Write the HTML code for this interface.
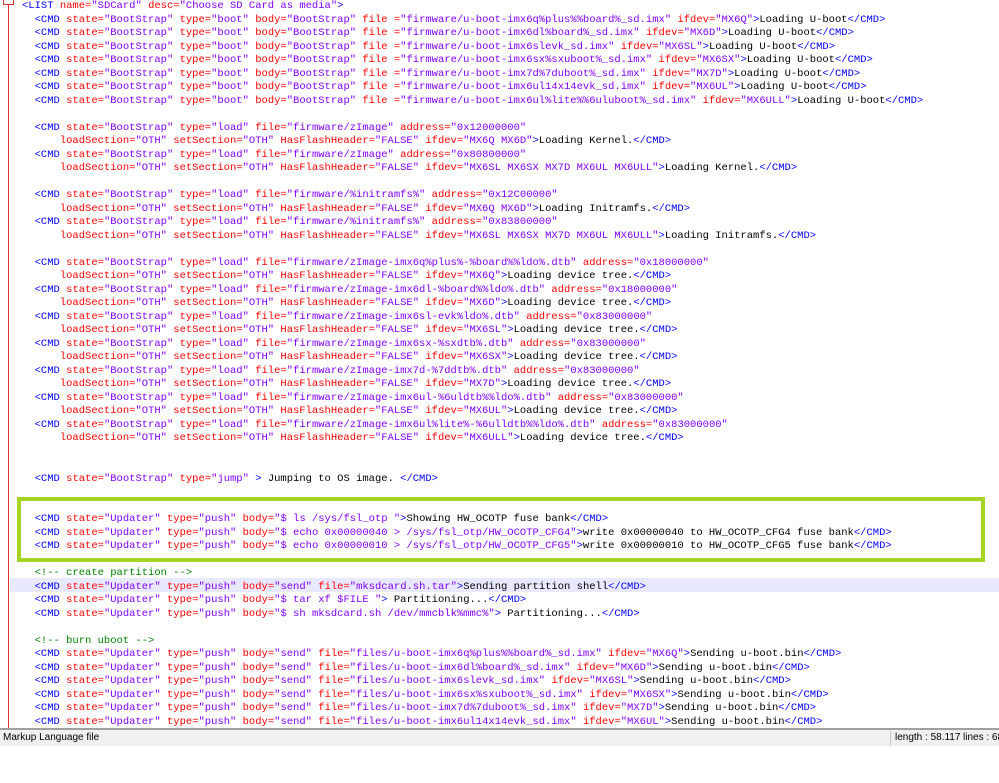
<!DOCTYPE html>
<html><head><meta charset="utf-8"><style>
html,body{margin:0;padding:0;background:#fff;width:999px;height:783px;overflow:hidden;position:relative}
#ed{position:absolute;left:0;top:0;width:999px;height:728px;overflow:hidden;background:#fff}
pre{position:absolute;left:22px;top:0px;margin:0;font-family:"Liberation Mono",monospace;font-size:10.5px;line-height:13.5px;color:#000;white-space:pre}
pre i,pre b,pre u,pre s{font-style:normal;font-weight:normal;text-decoration:none}
pre i{color:#0000ff}pre b{color:#ff0000}pre u{color:#8000ff}pre s{color:#008000}
.hl{position:absolute;left:10px;top:578px;width:989px;height:13.5px;background:#e8e8ff}
.red{position:absolute;left:8px;top:0;width:1px;height:728px;background:#e03030}
.fold{position:absolute;left:3px;top:0;width:9px;height:4px;border:1px solid #e03030;border-top:none;background:#fff}
.box{position:absolute;left:17px;top:497px;width:960px;height:57px;border:4px solid #a6d422}
#sb{position:absolute;left:0;top:728px;width:999px;height:18px;background:#f0f0f0;border-top:2px solid #a0a0a0;box-sizing:border-box;font-family:"Liberation Sans",sans-serif;font-size:10px;color:#000;white-space:nowrap}
#sb span{position:absolute;top:2px;white-space:nowrap}
.sep{position:absolute;left:890px;top:1px;width:1px;height:15px;background:#c8c8c8}
</style></head><body>
<div id="ed">
<div class="hl"></div>
<div class="red"></div><div class="fold"></div>
<pre><i>&lt;LIST</i> <b>name=</b><u>"SDCard"</u> <b>desc=</b><u>"Choose SD Card as media"</u><i>&gt;</i>
  <i>&lt;CMD</i> <b>state=</b><u>"BootStrap"</u> <b>type=</b><u>"boot"</u> <b>body=</b><u>"BootStrap"</u> <b>file =</b><u>"firmware/u-boot-imx6q%plus%%board%_sd.imx"</u> <b>ifdev=</b><u>"MX6Q"</u><i>&gt;</i>Loading U-boot<i>&lt;/CMD&gt;</i>
  <i>&lt;CMD</i> <b>state=</b><u>"BootStrap"</u> <b>type=</b><u>"boot"</u> <b>body=</b><u>"BootStrap"</u> <b>file =</b><u>"firmware/u-boot-imx6dl%board%_sd.imx"</u> <b>ifdev=</b><u>"MX6D"</u><i>&gt;</i>Loading U-boot<i>&lt;/CMD&gt;</i>
  <i>&lt;CMD</i> <b>state=</b><u>"BootStrap"</u> <b>type=</b><u>"boot"</u> <b>body=</b><u>"BootStrap"</u> <b>file =</b><u>"firmware/u-boot-imx6slevk_sd.imx"</u> <b>ifdev=</b><u>"MX6SL"</u><i>&gt;</i>Loading U-boot<i>&lt;/CMD&gt;</i>
  <i>&lt;CMD</i> <b>state=</b><u>"BootStrap"</u> <b>type=</b><u>"boot"</u> <b>body=</b><u>"BootStrap"</u> <b>file =</b><u>"firmware/u-boot-imx6sx%sxuboot%_sd.imx"</u> <b>ifdev=</b><u>"MX6SX"</u><i>&gt;</i>Loading U-boot<i>&lt;/CMD&gt;</i>
  <i>&lt;CMD</i> <b>state=</b><u>"BootStrap"</u> <b>type=</b><u>"boot"</u> <b>body=</b><u>"BootStrap"</u> <b>file =</b><u>"firmware/u-boot-imx7d%7duboot%_sd.imx"</u> <b>ifdev=</b><u>"MX7D"</u><i>&gt;</i>Loading U-boot<i>&lt;/CMD&gt;</i>
  <i>&lt;CMD</i> <b>state=</b><u>"BootStrap"</u> <b>type=</b><u>"boot"</u> <b>body=</b><u>"BootStrap"</u> <b>file =</b><u>"firmware/u-boot-imx6ul14x14evk_sd.imx"</u> <b>ifdev=</b><u>"MX6UL"</u><i>&gt;</i>Loading U-boot<i>&lt;/CMD&gt;</i>
  <i>&lt;CMD</i> <b>state=</b><u>"BootStrap"</u> <b>type=</b><u>"boot"</u> <b>body=</b><u>"BootStrap"</u> <b>file =</b><u>"firmware/u-boot-imx6ul%lite%%6uluboot%_sd.imx"</u> <b>ifdev=</b><u>"MX6ULL"</u><i>&gt;</i>Loading U-boot<i>&lt;/CMD&gt;</i>

  <i>&lt;CMD</i> <b>state=</b><u>"BootStrap"</u> <b>type=</b><u>"load"</u> <b>file=</b><u>"firmware/zImage"</u> <b>address=</b><u>"0x12000000"</u>
      <b>loadSection=</b><u>"OTH"</u> <b>setSection=</b><u>"OTH"</u> <b>HasFlashHeader=</b><u>"FALSE"</u> <b>ifdev=</b><u>"MX6Q MX6D"</u><i>&gt;</i>Loading Kernel.<i>&lt;/CMD&gt;</i>
  <i>&lt;CMD</i> <b>state=</b><u>"BootStrap"</u> <b>type=</b><u>"load"</u> <b>file=</b><u>"firmware/zImage"</u> <b>address=</b><u>"0x80800000"</u>
      <b>loadSection=</b><u>"OTH"</u> <b>setSection=</b><u>"OTH"</u> <b>HasFlashHeader=</b><u>"FALSE"</u> <b>ifdev=</b><u>"MX6SL MX6SX MX7D MX6UL MX6ULL"</u><i>&gt;</i>Loading Kernel.<i>&lt;/CMD&gt;</i>

  <i>&lt;CMD</i> <b>state=</b><u>"BootStrap"</u> <b>type=</b><u>"load"</u> <b>file=</b><u>"firmware/%initramfs%"</u> <b>address=</b><u>"0x12C00000"</u>
      <b>loadSection=</b><u>"OTH"</u> <b>setSection=</b><u>"OTH"</u> <b>HasFlashHeader=</b><u>"FALSE"</u> <b>ifdev=</b><u>"MX6Q MX6D"</u><i>&gt;</i>Loading Initramfs.<i>&lt;/CMD&gt;</i>
  <i>&lt;CMD</i> <b>state=</b><u>"BootStrap"</u> <b>type=</b><u>"load"</u> <b>file=</b><u>"firmware/%initramfs%"</u> <b>address=</b><u>"0x83800000"</u>
      <b>loadSection=</b><u>"OTH"</u> <b>setSection=</b><u>"OTH"</u> <b>HasFlashHeader=</b><u>"FALSE"</u> <b>ifdev=</b><u>"MX6SL MX6SX MX7D MX6UL MX6ULL"</u><i>&gt;</i>Loading Initramfs.<i>&lt;/CMD&gt;</i>

  <i>&lt;CMD</i> <b>state=</b><u>"BootStrap"</u> <b>type=</b><u>"load"</u> <b>file=</b><u>"firmware/zImage-imx6q%plus%-%board%%ldo%.dtb"</u> <b>address=</b><u>"0x18000000"</u>
      <b>loadSection=</b><u>"OTH"</u> <b>setSection=</b><u>"OTH"</u> <b>HasFlashHeader=</b><u>"FALSE"</u> <b>ifdev=</b><u>"MX6Q"</u><i>&gt;</i>Loading device tree.<i>&lt;/CMD&gt;</i>
  <i>&lt;CMD</i> <b>state=</b><u>"BootStrap"</u> <b>type=</b><u>"load"</u> <b>file=</b><u>"firmware/zImage-imx6dl-%board%%ldo%.dtb"</u> <b>address=</b><u>"0x18000000"</u>
      <b>loadSection=</b><u>"OTH"</u> <b>setSection=</b><u>"OTH"</u> <b>HasFlashHeader=</b><u>"FALSE"</u> <b>ifdev=</b><u>"MX6D"</u><i>&gt;</i>Loading device tree.<i>&lt;/CMD&gt;</i>
  <i>&lt;CMD</i> <b>state=</b><u>"BootStrap"</u> <b>type=</b><u>"load"</u> <b>file=</b><u>"firmware/zImage-imx6sl-evk%ldo%.dtb"</u> <b>address=</b><u>"0x83000000"</u>
      <b>loadSection=</b><u>"OTH"</u> <b>setSection=</b><u>"OTH"</u> <b>HasFlashHeader=</b><u>"FALSE"</u> <b>ifdev=</b><u>"MX6SL"</u><i>&gt;</i>Loading device tree.<i>&lt;/CMD&gt;</i>
  <i>&lt;CMD</i> <b>state=</b><u>"BootStrap"</u> <b>type=</b><u>"load"</u> <b>file=</b><u>"firmware/zImage-imx6sx-%sxdtb%.dtb"</u> <b>address=</b><u>"0x83000000"</u>
      <b>loadSection=</b><u>"OTH"</u> <b>setSection=</b><u>"OTH"</u> <b>HasFlashHeader=</b><u>"FALSE"</u> <b>ifdev=</b><u>"MX6SX"</u><i>&gt;</i>Loading device tree.<i>&lt;/CMD&gt;</i>
  <i>&lt;CMD</i> <b>state=</b><u>"BootStrap"</u> <b>type=</b><u>"load"</u> <b>file=</b><u>"firmware/zImage-imx7d-%7ddtb%.dtb"</u> <b>address=</b><u>"0x83000000"</u>
      <b>loadSection=</b><u>"OTH"</u> <b>setSection=</b><u>"OTH"</u> <b>HasFlashHeader=</b><u>"FALSE"</u> <b>ifdev=</b><u>"MX7D"</u><i>&gt;</i>Loading device tree.<i>&lt;/CMD&gt;</i>
  <i>&lt;CMD</i> <b>state=</b><u>"BootStrap"</u> <b>type=</b><u>"load"</u> <b>file=</b><u>"firmware/zImage-imx6ul-%6uldtb%%ldo%.dtb"</u> <b>address=</b><u>"0x83000000"</u>
      <b>loadSection=</b><u>"OTH"</u> <b>setSection=</b><u>"OTH"</u> <b>HasFlashHeader=</b><u>"FALSE"</u> <b>ifdev=</b><u>"MX6UL"</u><i>&gt;</i>Loading device tree.<i>&lt;/CMD&gt;</i>
  <i>&lt;CMD</i> <b>state=</b><u>"BootStrap"</u> <b>type=</b><u>"load"</u> <b>file=</b><u>"firmware/zImage-imx6ul%lite%-%6ulldtb%%ldo%.dtb"</u> <b>address=</b><u>"0x83000000"</u>
      <b>loadSection=</b><u>"OTH"</u> <b>setSection=</b><u>"OTH"</u> <b>HasFlashHeader=</b><u>"FALSE"</u> <b>ifdev=</b><u>"MX6ULL"</u><i>&gt;</i>Loading device tree.<i>&lt;/CMD&gt;</i>


  <i>&lt;CMD</i> <b>state=</b><u>"BootStrap"</u> <b>type=</b><u>"jump"</u> <i>&gt;</i> Jumping to OS image. <i>&lt;/CMD&gt;</i>


  <i>&lt;CMD</i> <b>state=</b><u>"Updater"</u> <b>type=</b><u>"push"</u> <b>body=</b><u>"$ ls /sys/fsl_otp "</u><i>&gt;</i>Showing HW_OCOTP fuse bank<i>&lt;/CMD&gt;</i>
  <i>&lt;CMD</i> <b>state=</b><u>"Updater"</u> <b>type=</b><u>"push"</u> <b>body=</b><u>"$ echo 0x00000040 &gt; /sys/fsl_otp/HW_OCOTP_CFG4"</u><i>&gt;</i>write 0x00000040 to HW_OCOTP_CFG4 fuse bank<i>&lt;/CMD&gt;</i>
  <i>&lt;CMD</i> <b>state=</b><u>"Updater"</u> <b>type=</b><u>"push"</u> <b>body=</b><u>"$ echo 0x00000010 &gt; /sys/fsl_otp/HW_OCOTP_CFG5"</u><i>&gt;</i>write 0x00000010 to HW_OCOTP_CFG5 fuse bank<i>&lt;/CMD&gt;</i>

  <s>&lt;!-- create partition --&gt;</s>
  <i>&lt;CMD</i> <b>state=</b><u>"Updater"</u> <b>type=</b><u>"push"</u> <b>body=</b><u>"send"</u> <b>file=</b><u>"mksdcard.sh.tar"</u><i>&gt;</i>Sending partition shell<i>&lt;/CMD&gt;</i>
  <i>&lt;CMD</i> <b>state=</b><u>"Updater"</u> <b>type=</b><u>"push"</u> <b>body=</b><u>"$ tar xf $FILE "</u><i>&gt;</i> Partitioning...<i>&lt;/CMD&gt;</i>
  <i>&lt;CMD</i> <b>state=</b><u>"Updater"</u> <b>type=</b><u>"push"</u> <b>body=</b><u>"$ sh mksdcard.sh /dev/mmcblk%mmc%"</u><i>&gt;</i> Partitioning...<i>&lt;/CMD&gt;</i>

  <s>&lt;!-- burn uboot --&gt;</s>
  <i>&lt;CMD</i> <b>state=</b><u>"Updater"</u> <b>type=</b><u>"push"</u> <b>body=</b><u>"send"</u> <b>file=</b><u>"files/u-boot-imx6q%plus%%board%_sd.imx"</u> <b>ifdev=</b><u>"MX6Q"</u><i>&gt;</i>Sending u-boot.bin<i>&lt;/CMD&gt;</i>
  <i>&lt;CMD</i> <b>state=</b><u>"Updater"</u> <b>type=</b><u>"push"</u> <b>body=</b><u>"send"</u> <b>file=</b><u>"files/u-boot-imx6dl%board%_sd.imx"</u> <b>ifdev=</b><u>"MX6D"</u><i>&gt;</i>Sending u-boot.bin<i>&lt;/CMD&gt;</i>
  <i>&lt;CMD</i> <b>state=</b><u>"Updater"</u> <b>type=</b><u>"push"</u> <b>body=</b><u>"send"</u> <b>file=</b><u>"files/u-boot-imx6slevk_sd.imx"</u> <b>ifdev=</b><u>"MX6SL"</u><i>&gt;</i>Sending u-boot.bin<i>&lt;/CMD&gt;</i>
  <i>&lt;CMD</i> <b>state=</b><u>"Updater"</u> <b>type=</b><u>"push"</u> <b>body=</b><u>"send"</u> <b>file=</b><u>"files/u-boot-imx6sx%sxuboot%_sd.imx"</u> <b>ifdev=</b><u>"MX6SX"</u><i>&gt;</i>Sending u-boot.bin<i>&lt;/CMD&gt;</i>
  <i>&lt;CMD</i> <b>state=</b><u>"Updater"</u> <b>type=</b><u>"push"</u> <b>body=</b><u>"send"</u> <b>file=</b><u>"files/u-boot-imx7d%7duboot%_sd.imx"</u> <b>ifdev=</b><u>"MX7D"</u><i>&gt;</i>Sending u-boot.bin<i>&lt;/CMD&gt;</i>
  <i>&lt;CMD</i> <b>state=</b><u>"Updater"</u> <b>type=</b><u>"push"</u> <b>body=</b><u>"send"</u> <b>file=</b><u>"files/u-boot-imx6ul14x14evk_sd.imx"</u> <b>ifdev=</b><u>"MX6UL"</u><i>&gt;</i>Sending u-boot.bin<i>&lt;/CMD&gt;</i>
  <i>&lt;CMD</i> <b>state=</b><u>"Updater"</u> <b>type=</b><u>"push"</u> <b>body=</b><u>"send"</u> <b>file=</b><u>"files/u-boot-imx6ul%lite%%6uluboot%_sd.imx"</u> <b>ifdev=</b><u>"MX6ULL"</u><i>&gt;</i>Sending u-boot.bin<i>&lt;/CMD&gt;</i></pre>
<div class="box"></div>
</div>
<div id="sb"><span style="left:895px">length : 58.117</span><span style="left:3px">Markup Language file</span><div class="sep"></div><span style="left:963px">lines : 68</span></div>
</body></html>
